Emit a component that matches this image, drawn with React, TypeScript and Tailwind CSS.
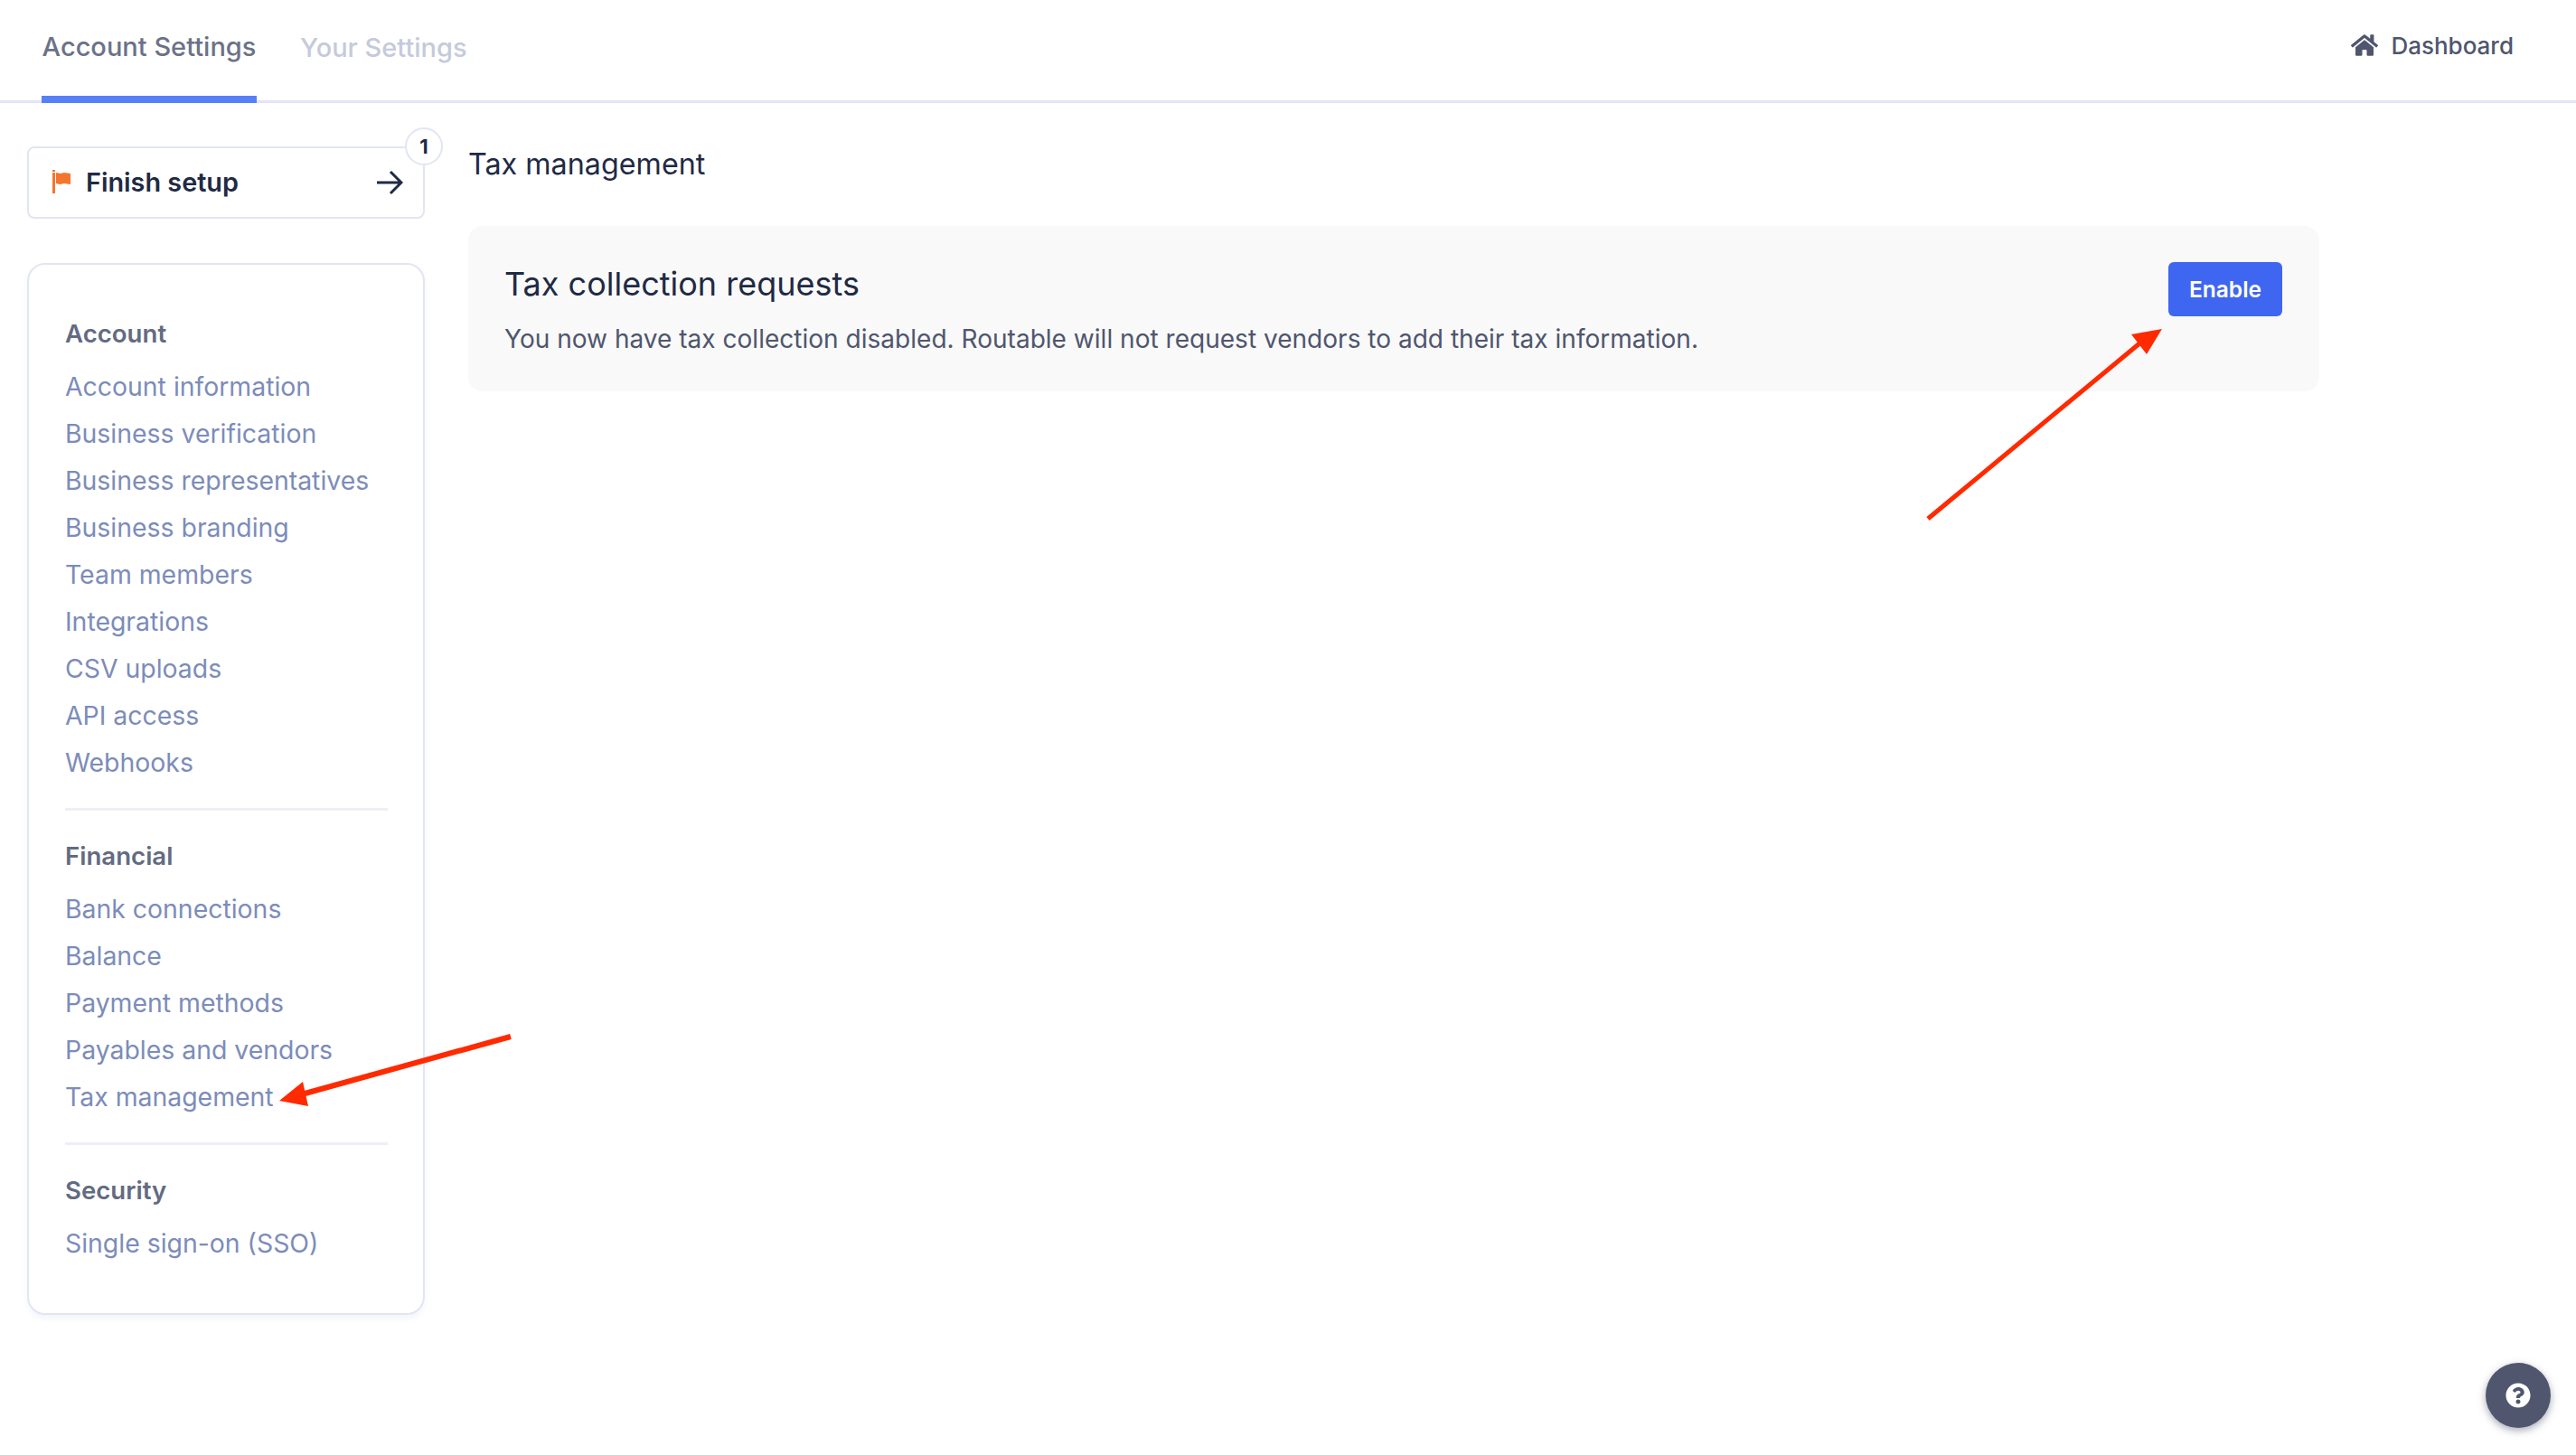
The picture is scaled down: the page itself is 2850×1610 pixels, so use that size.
import { FaHome, FaQuestionCircle } from 'react-icons/fa';

const sections = [
  {
    title: 'Account',
    items: [
      'Account information',
      'Business verification',
      'Business representatives',
      'Business branding',
      'Team members',
      'Integrations',
      'CSV uploads',
      'API access',
      'Webhooks',
    ],
  },
  {
    title: 'Financial',
    items: ['Bank connections', 'Balance', 'Payment methods', 'Payables and vendors', 'Tax management'],
  },
  {
    title: 'Security',
    items: ['Single sign-on (SSO)'],
  },
];

function SidebarSection({ title, items, last }: { title: string; items: string[]; last: boolean }) {
  return (
    <div>
      <div className="h-[52px] flex items-center text-[27.6px] font-semibold text-[#636b82]">{title}</div>
      <ul className="mt-[6px]">
        {items.map((item) => (
          <li key={item} className="h-[52px] flex items-center text-[28.4px] text-[#7c8cba]">
            {item}
          </li>
        ))}
      </ul>
      {!last && <div className="mt-[24px] mb-[25px] h-[3px] bg-[#eeeff6]" />}
    </div>
  );
}

export default function App() {
  return (
    <div
      className="relative h-[1610px] w-full overflow-hidden bg-white"
      style={{ fontFamily: 'Inter, sans-serif' }}
    >
      {/* Top tabs */}
      <header className="h-[114px] border-b-[3px] border-[#e2e5f3] flex justify-between pl-[46px] pr-[69px]">
        <nav className="flex gap-[48px]">
          <div className="h-[114px] w-[238px] pb-[2px] border-b-[8px] border-[#5580f8] flex items-center justify-center text-[29px] font-medium text-[#6b7288] whitespace-nowrap">
            Account Settings
          </div>
          <div className="h-[111px] pb-[6px] flex items-center text-[29px] font-medium text-[#c5cadb] whitespace-nowrap">
            Your Settings
          </div>
        </nav>
        <div className="h-[100px] flex items-center gap-[14px] text-[26px] font-medium text-[#4f566e]">
          <FaHome className="w-[30px] h-[28px]" />
          <span>Dashboard</span>
        </div>
      </header>

      <div className="flex pl-[30px]">
        {/* Sidebar */}
        <aside className="w-[440px] pt-[48px]">
          <div className="relative h-[80px] rounded-[8px] border-[2px] border-[#e2e5f3] flex items-center pl-[26px] pr-[22px]">
            <svg viewBox="0 0 20 26" className="w-[20px] h-[26px] mb-[2px]" aria-hidden>
              <rect x="0" y="0" width="3" height="2" fill="#f4752e" />
              <rect x="0" y="3" width="3" height="23" fill="#f4752e" />
              <path d="M4 3 L9 4 L13 3 L20 4 L20 16 L13 15 L8 16 L4 15 Z" fill="#f4752e" />
            </svg>
            <span className="ml-[17px] text-[28.8px] font-semibold text-[#1f2a44]">Finish setup</span>
            <svg viewBox="0 0 30 28" className="ml-auto w-[30px] h-[28px]" fill="none" aria-hidden>
              <path d="M1 14 H28 M16 2 L28 14 L16 26" stroke="#1f2a44" strokeWidth="3" />
            </svg>
            <span className="absolute -right-[22px] -top-[23px] w-[42px] h-[42px] rounded-full border-[2px] border-[#e2e5f3] bg-white flex items-center justify-center text-[22px] font-bold text-[#1f2a44]">
              1
            </span>
          </div>

          <div className="mt-[49px] rounded-[20px] border-[2px] border-[#e2e5f3] pt-[51px] pb-[51px] pl-[40px] pr-[39px] shadow-[0_4px_6px_rgba(226,229,243,0.4)]">
            {sections.map((section, i) => (
              <SidebarSection
                key={section.title}
                title={section.title}
                items={section.items}
                last={i === sections.length - 1}
              />
            ))}
          </div>
        </aside>

        {/* Main content */}
        <main className="ml-[48px] w-[2048px] pt-[46px]">
          <h1 className="h-[44px] flex items-center text-[32.3px] font-normal text-[#1f2a44]">Tax management</h1>
          <section className="mt-[46px] h-[183px] rounded-[16px] bg-[#f9f9f9] flex justify-between pl-[40px] pr-[41px] pt-[40px]">
            <div>
              <h2 className="h-[48px] flex items-center text-[36px] font-normal text-[#1f2a44]">
                Tax collection requests
              </h2>
              <p className="mt-[15px] text-[28.05px] leading-[44px] text-[#4f566e]">
                You now have tax collection disabled. Routable will not request vendors to add their tax information.
              </p>
            </div>
            <button className="w-[126px] h-[60px] rounded-[6px] bg-[#3f66f0] text-white text-[24.5px] font-semibold">
              Enable
            </button>
          </section>
        </main>
      </div>

      {/* Help button */}
      <button className="absolute left-[2750px] top-[1508px] w-[72px] h-[72px] rounded-full bg-[#4f566e] flex items-center justify-center shadow-[0_3px_8px_rgba(79,86,110,0.5)]">
        <FaQuestionCircle className="w-[28px] h-[28px] text-white" />
      </button>

      {/* Red annotation arrows */}
      <svg className="absolute left-0 top-0 pointer-events-none" width="2850" height="1610" aria-hidden>
        <line x1="2133" y1="574" x2="2372" y2="376" stroke="#ff2a00" strokeWidth="5" />
        <polygon points="2392,364 2358,370 2375,392" fill="#ff2a00" />
        <line x1="565" y1="1147" x2="330" y2="1212" stroke="#ff2a00" strokeWidth="6" />
        <polygon points="309,1218 335,1197 341,1224" fill="#ff2a00" />
      </svg>
    </div>
  );
}
